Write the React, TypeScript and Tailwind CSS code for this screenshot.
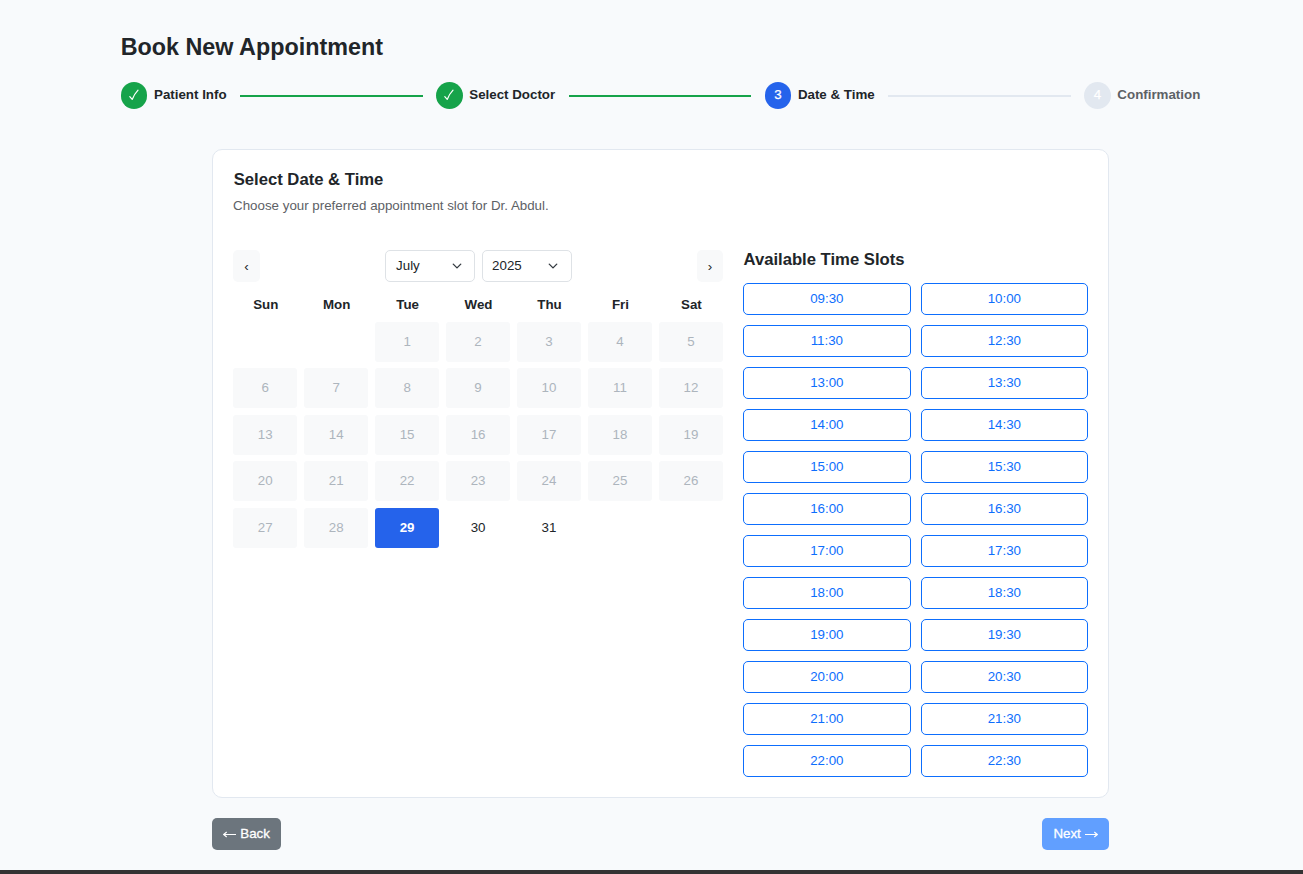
import { Fragment } from "react";
import clsx from "clsx";

const steps = [
  { label: "Patient Info", mark: "", state: "done" },
  { label: "Select Doctor", mark: "", state: "done" },
  { label: "Date & Time", mark: "3", state: "active" },
  { label: "Confirmation", mark: "4", state: "todo" },
];

const weekdays = ["Sun", "Mon", "Tue", "Wed", "Thu", "Fri", "Sat"];

const days = Array.from({ length: 31 }, (_, i) => i + 1);

const slots = [
  "09:30", "10:00", "11:30", "12:30", "13:00", "13:30", "14:00", "14:30",
  "15:00", "15:30", "16:00", "16:30", "17:00", "17:30", "18:00", "18:30",
  "19:00", "19:30", "20:00", "20:30", "21:00", "21:30", "22:00", "22:30",
];

function CheckMark() {
  return (
    <svg viewBox="0 0 10 12" className="h-3 w-[10px]" fill="none" stroke="white" strokeWidth="1.2" strokeLinecap="round" strokeLinejoin="round">
      <path d="M0.8 7.6 3.2 10.4 C4.6 7 6.4 4 9 1.2" />
    </svg>
  );
}

function Arrow({ flip = false }: { flip?: boolean }) {
  return (
    <svg viewBox="0 0 13 7" className={clsx("mt-[2px] h-[7px] w-[13px]", flip && "rotate-180")} fill="none" stroke="white" strokeWidth="1.1">
      <path d="M0 3.5h12.3M9.3 1l3 2.5-3 2.5" />
    </svg>
  );
}

function Stepper() {
  return (
    <div className="mt-[18px] flex h-[27px] items-center">
      {steps.map((step, i) => (
        <Fragment key={step.label}>
          <div className="flex items-center gap-[6.67px]">
            <span
              className={clsx(
                "flex size-[26.67px] items-center justify-center rounded-full pb-[2px] text-white [-webkit-text-stroke:0.25px_white]",
                step.state === "done" && "bg-[#16a34a]",
                step.state === "active" && "bg-[#2563eb]",
                step.state === "todo" && "bg-[#e2e8f0]"
              )}
            >
              {step.state === "done" ? <CheckMark /> : step.mark}
            </span>
            <span
              className={clsx(
                "pb-[2px] font-bold whitespace-nowrap",
                step.state === "todo" ? "text-[#5d6166]" : "text-[#212529]"
              )}
            >
              {step.label}
            </span>
          </div>
          {i < steps.length - 1 && (
            <div
              className={clsx(
                "mx-[13.33px] h-[2px] flex-1",
                step.state === "done" ? "bg-[#16a34a]" : "bg-[#e2e8f0]"
              )}
            />
          )}
        </Fragment>
      ))}
    </div>
  );
}

function Picker({ value, inset }: { value: string; inset: string }) {
  return (
    <button className={clsx("flex h-8 w-[90px] items-center justify-between rounded-[5px] border border-[#dee2e6] bg-white", inset)}>
      <span>{value}</span>
      <svg viewBox="0 0 16 16" className="size-[10px]" fill="none" stroke="#343a40" strokeWidth="2.2" strokeLinecap="round" strokeLinejoin="round">
        <path d="m2 5 6 6 6-6" />
      </svg>
    </button>
  );
}

function Calendar() {
  return (
    <div className="w-[490px]">
      <div className="flex items-center justify-between">
        <button className="h-8 w-[27px] rounded-[5px] bg-[#f8f9fa] pt-px">‹</button>
        <div className="flex gap-[7px]">
          <Picker value="July" inset="pr-[12px] pl-[10px]" />
          <Picker value="2025" inset="pr-[13px] pl-[9px]" />
        </div>
        <button className="h-8 w-[26px] rounded-[5px] bg-[#f8f9fa] pt-px">›</button>
      </div>
      <div className="mt-[13px] grid grid-cols-7 gap-x-[6.67px] text-center leading-5 font-bold">
        {weekdays.map((d) => (
          <span key={d} className="pl-px">{d}</span>
        ))}
      </div>
      <div className="mt-[7px] grid grid-cols-7 gap-x-[6.67px] gap-y-[6.45px]">
        {days.map((d) => (
          <button
            key={d}
            className={clsx(
              "h-10 rounded-[3px]",
              d === 1 && "col-start-3",
              d < 29 && "bg-[#f8f9fa] pb-[0.2px] text-[#adb5bd]",
              d === 29 && "bg-[#2563eb] font-bold text-white"
            )}
          >
            {d}
          </button>
        ))}
      </div>
    </div>
  );
}

export default function App() {
  return (
    <div className="flex h-[874px] flex-col border-b-4 border-[#333333] bg-[#f8fafc] pr-[102.7px] pl-[120.7px] font-['Liberation_Sans',Arial,sans-serif] text-[13.333px] leading-5 text-[#212529]">
      <h1 className="mt-[33px] text-[23.333px] leading-7 font-bold">Book New Appointment</h1>
      <div className="mt-[3px] pb-10">
        <Stepper />
      </div>
      <main className="ml-[91.4px] w-[897px]">
        <section className="h-[649px] rounded-[10px] border border-[#e2e8f0] bg-white px-5 pt-5">
          <h2 className="pl-[0.6px] text-[16.667px] leading-5 font-bold">Select Date &amp; Time</h2>
          <p className="mt-[6px] text-[#5d6166]">Choose your preferred appointment slot for Dr. Abdul.</p>
          <div className="mt-[34px] flex gap-5">
            <Calendar />
            <div className="w-[345px]">
              <h3 className="pl-[0.4px] text-[16.667px] leading-5 font-bold">Available Time Slots</h3>
              <div className="mt-[13px] grid grid-cols-2 gap-[10px]">
                {slots.map((s) => (
                  <button key={s} className="h-8 rounded-[5px] border border-[#0d6efd] pb-px text-[#0d6efd]">
                    {s}
                  </button>
                ))}
              </div>
            </div>
          </div>
        </section>
        <div className="mt-5 flex justify-between text-white [-webkit-text-stroke:0.3px_white]">
          <button className="flex h-8 w-[69px] items-center justify-center gap-[4px] rounded-[5px] bg-[#6c757d] pb-px">
            <Arrow flip />
            <span>Back</span>
          </button>
          <button className="flex h-8 w-[67px] items-center justify-center gap-[4px] rounded-[5px] bg-[#619fff] pb-px">
            <span>Next</span>
            <Arrow />
          </button>
        </div>
      </main>
    </div>
  );
}
